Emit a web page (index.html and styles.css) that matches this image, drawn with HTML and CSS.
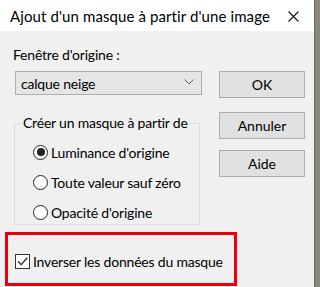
FILE: index.html
```html
<!DOCTYPE html>
<html lang="fr">
<head>
    <meta charset="UTF-8">
    <meta name="viewport" content="width=device-width, initial-scale=1.0">
    <title>Ajout d'un masque à partir d'une image</title>
    <link rel="stylesheet" href="styles.css">
</head>
<body>

    <div class="dialog">
        <div class="titlebar">
            <span class="title">Ajout d'un masque à partir d'une image</span>
            <svg class="close" width="11" height="11" viewBox="0 0 11 11">
                <path d="M0.5 0.5 L10.5 10.5 M10.5 0.5 L0.5 10.5" stroke="#111" stroke-width="1.1" fill="none"/>
            </svg>
        </div>

        <div class="content">
            <div class="main">
                <div class="field-label">Fenêtre d'origine :</div>
                <div class="select">
                    <span>calque neige</span>
                    <svg class="chevron" width="10" height="6" viewBox="0 0 10 6">
                        <path d="M0.5 0.5 L5 5 L9.5 0.5" stroke="#606060" stroke-width="1" fill="none"/>
                    </svg>
                </div>

                <div class="group">
                    <div class="legend">Créer un masque à partir de</div>
                    <div class="radio-row">
                        <span class="radio checked"></span>
                        <span>Luminance d'origine</span>
                    </div>
                    <div class="radio-row">
                        <span class="radio"></span>
                        <span>Toute valeur sauf zéro</span>
                    </div>
                    <div class="radio-row">
                        <span class="radio"></span>
                        <span>Opacité d'origine</span>
                    </div>
                </div>
            </div>

            <div class="buttons">
                <button class="btn btn-ok">OK</button>
                <button class="btn btn-cancel">Annuler</button>
                <button class="btn btn-help">Aide</button>
            </div>
        </div>

        <div class="highlight">
            <span class="checkbox">
                <svg width="13" height="13" viewBox="0 0 13 13">
                    <path d="M2 6.5 L5.2 9.6 L11.2 2.8" stroke="#222" stroke-width="1.3" fill="none"/>
                </svg>
            </span>
            <span>Inverser les données du masque</span>
        </div>
    </div>

</body>
</html>
```

FILE: styles.css
```css
body {
    margin: 0;
    width: 320px;
    height: 287px;
    overflow: hidden;
    background: #8c857e;
    font-family: Lato, "Open Sans", sans-serif;
    color: #000;
}

.dialog {
    width: 315px;
    height: 287px;
    background: #f0f0f0;
    border-right: 1px solid #6a6a6a;
    box-sizing: border-box;
}

.titlebar {
    height: 31px;
    background: #fff;
    display: flex;
    align-items: center;
    justify-content: space-between;
    padding: 0 15px 0 10px;
}

.title {
    font-size: 15px;
    letter-spacing: 0.1px;
    color: #000;
}

.close {
    margin-top: 1px;
}

.content {
    display: flex;
    padding: 15px 0 0 14px;
    letter-spacing: -0.2px;
}

.main {
    width: 188px;
}

.field-label {
    font-size: 14px;
    line-height: 18px;
    margin-left: -1px;
}

.select {
    margin-top: 7px;
    margin-left: 1px;
    width: 187px;
    height: 24px;
    box-sizing: border-box;
    border: 1px solid #adadad;
    background: #e5e5e5;
    display: flex;
    align-items: center;
    justify-content: space-between;
    padding: 0 7px 0 5px;
    font-size: 14px;
}

.chevron {
    margin-top: -2px;
}

.group {
    margin-top: 28px;
    width: 186px;
    height: 102px;
    box-sizing: border-box;
    border: 1px solid #dcdcdc;
    position: relative;
    padding-top: 13px;
}

.legend {
    position: absolute;
    top: -10px;
    left: 6px;
    padding: 0 2px;
    background: #f0f0f0;
    font-size: 14px;
    line-height: 18px;
}

.radio-row {
    display: flex;
    align-items: center;
    gap: 3px;
    height: 30px;
    padding-left: 18px;
    font-size: 14px;
}

.radio {
    width: 15px;
    height: 15px;
    box-sizing: border-box;
    border: 1.5px solid #222;
    border-radius: 50%;
    background: #fff;
    display: flex;
    align-items: center;
    justify-content: center;
}

.radio.checked::after {
    content: "";
    width: 8px;
    height: 8px;
    border-radius: 50%;
    background: #222;
}

.buttons {
    margin-left: 17px;
    display: flex;
    flex-direction: column;
}

.btn {
    width: 86px;
    height: 27px;
    box-sizing: border-box;
    border: 1px solid #adadad;
    background: #e1e1e1;
    font-family: inherit;
    font-size: 14px;
    color: #000;
    padding: 0;
}

.btn-ok {
    margin-top: 25px;
}

.btn-cancel {
    margin-top: 14px;
}

.btn-help {
    margin-top: 11px;
}

.highlight {
    margin: 7px 0 0 5px;
    width: 232px;
    height: 54px;
    box-sizing: border-box;
    border: 3px solid #e8000b;
    display: flex;
    align-items: center;
    gap: 3px;
    padding: 5px 0 0 7px;
    font-size: 14px;
    letter-spacing: -0.2px;
}

.checkbox {
    width: 15px;
    height: 15px;
    box-sizing: border-box;
    border: 1px solid #333;
    background: #fff;
    display: flex;
    align-items: center;
    justify-content: center;
}
```
